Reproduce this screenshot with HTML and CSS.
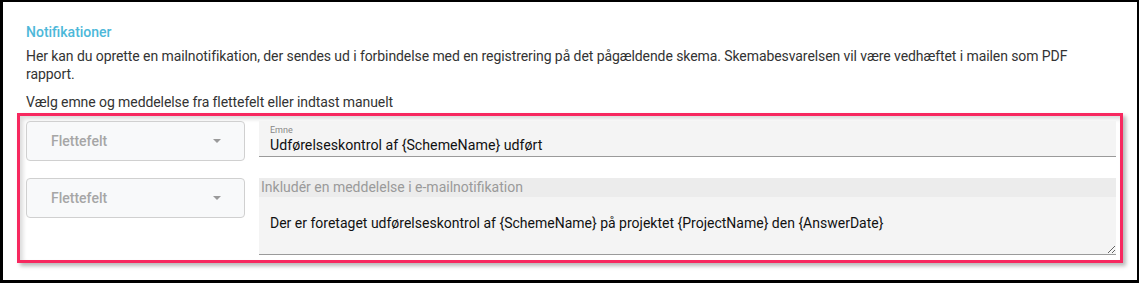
FILE: index.html
```html
<!DOCTYPE html>
<html lang="da">
<head>
<meta charset="utf-8">
<title>Notifikationer</title>
<link rel="stylesheet" href="styles.css">
</head>
<body>
<div class="frame">
  <div class="content">
    <h3 class="title">Notifikationer</h3>
    <p class="desc">Her kan du oprette en mailnotifikation, der sendes ud i forbindelse med en registrering på det pågældende skema. Skemabesvarelsen vil være vedhæftet i mailen som PDF rapport.</p>
    <p class="hint">Vælg emne og meddelelse fra flettefelt eller indtast manuelt</p>
    <div class="box">
      <div class="select">
        <span>Flettefelt</span>
        <span class="caret"></span>
      </div>
      <div class="field">
        <div class="field-label">Emne</div>
        <div class="field-value">Udførelseskontrol af {SchemeName} udført</div>
      </div>
      <div class="select">
        <span>Flettefelt</span>
        <span class="caret"></span>
      </div>
      <div class="area-group">
        <div class="area-label">Inkludér en meddelelse i e-mailnotifikation</div>
        <textarea class="area">Der er foretaget udførelseskontrol af {SchemeName} på projektet {ProjectName} den {AnswerDate}</textarea>
      </div>
    </div>
  </div>
</div>
</body>
</html>
```
FILE: styles.css
```css
html, body {
  margin: 0;
  padding: 0;
  background: #ffffff;
}
.frame {
  box-sizing: border-box;
  width: 1139px;
  height: 283px;
  border-style: solid;
  border-color: #000;
  border-width: 2px 2px 3px 3px;
  background: #fff;
  font-family: Roboto, "Liberation Sans", sans-serif;
  color: #333;
  overflow: hidden;
}
.content {
  padding: 21px 23px 0 23px;
}
.title {
  margin: 0;
  font-size: 14px;
  font-weight: 500;
  line-height: 18px;
  color: #4db8d9;
}
.desc {
  margin: 6px 0 10px 0;
  font-size: 14px;
  line-height: 18px;
  color: #333;
  padding-right: 30px;
  letter-spacing: -0.08px;
}
.hint {
  margin: 0;
  font-size: 14px;
  line-height: 18px;
  color: #333;
  letter-spacing: -0.08px;
}
.box {
  margin: 2px -9px 0 -9px;
  border: 3px solid #f7285f;
  padding: 5px 4px 5px 6px;
  display: grid;
  grid-template-columns: 219px 1fr;
  column-gap: 14px;
  row-gap: 17px;
  box-shadow: 3px 3px 4px rgba(0,0,0,0.28), inset 3px 3px 4px rgba(0,0,0,0.14);
}
.select {
  box-sizing: border-box;
  height: 40px;
  border: 1px solid #d0d0d0;
  border-radius: 4px;
  background: #f8f9fa;
  display: flex;
  align-items: center;
  justify-content: space-between;
  padding: 0 23px 0 24px;
  font-size: 14px;
  font-weight: 500;
  color: #a6a6a6;
}
.caret {
  width: 0;
  height: 0;
  border-left: 4px solid transparent;
  border-right: 4px solid transparent;
  border-top: 4px solid #9a9a9a;
}
.field {
  box-sizing: border-box;
  height: 36px;
  background: #f4f4f4;
  border-bottom: 1px solid #9a9a9a;
  padding: 4px 11px 0 11px;
}
.field-label {
  font-size: 9px;
  line-height: 11px;
  color: #888;
}
.field-value {
  font-size: 14.2px;
  line-height: 18px;
  color: #111;
}
.area-group {
  display: flex;
  flex-direction: column;
}
.area-label {
  height: 19px;
  background: #ececec;
  font-size: 14px;
  line-height: 19px;
  color: #9a9a9a;
  padding-left: 2px;
}
.area {
  box-sizing: border-box;
  display: block;
  width: 100%;
  height: 58px;
  margin: 0;
  border: none;
  border-bottom: 1px solid #9a9a9a;
  background: #f4f4f4;
  padding: 17px 11px 0 11px;
  font-family: Roboto, "Liberation Sans", sans-serif;
  font-size: 14px;
  line-height: 18px;
  color: #111;
  resize: vertical;
  outline: none;
}
```
